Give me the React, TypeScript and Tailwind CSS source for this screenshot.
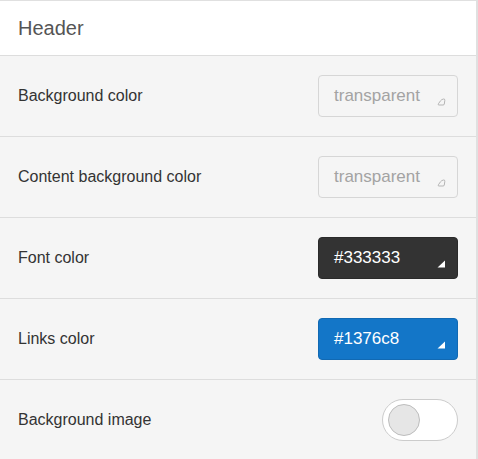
import React from 'react';

type ColorRow = {
  label: string;
  value: string;
  kind: 'empty' | 'dark' | 'blue';
};

const rows: ColorRow[] = [
  { label: 'Background color', value: 'transparent', kind: 'empty' },
  { label: 'Content background color', value: 'transparent', kind: 'empty' },
  { label: 'Font color', value: '#333333', kind: 'dark' },
  { label: 'Links color', value: '#1376c8', kind: 'blue' },
];

function Corner({ filled }: { filled: boolean }) {
  // little resize-like triangle in the bottom right of the picker
  return (
    <svg width="9" height="8" viewBox="0 0 9 8" className="absolute right-[11px] bottom-[10px]">
      {filled ? (
        <path d="M8 0.5 L8 7.5 L0.5 7.5 Z" fill="#ffffff" />
      ) : (
        <path
          d="M6.5 1 Q8 0.6 7.8 2.5 L7.3 6 Q7.2 7 6 7 L2 7 Q0.6 7 1.4 5.8 L3.5 2.8 Q4.5 1.4 6.5 1 Z"
          fill="none"
          stroke="#b5b5b5"
          strokeWidth="1"
        />
      )}
    </svg>
  );
}

function Picker({ value, kind }: { value: string; kind: ColorRow['kind'] }) {
  const base = 'relative w-[140px] h-[42px] rounded-[4px] flex items-center pl-[15px] text-[17px]';
  if (kind === 'dark') {
    return (
      <div className={`${base} bg-[#333333] border border-[#2a2a2a] text-white`}>
        {value}
        <Corner filled />
      </div>
    );
  }
  if (kind === 'blue') {
    return (
      <div className={`${base} bg-[#1376c8] border border-[#1169b3] text-white`}>
        {value}
        <Corner filled />
      </div>
    );
  }
  return (
    <div className={`${base} bg-[#f5f5f5] border border-[#d6d6d6] text-[#a3a3a3]`}>
      {value}
      <Corner filled={false} />
    </div>
  );
}

export default function App() {
  return (
    <div
      className="w-[478px] h-[459px] overflow-hidden bg-[#f5f5f5] border-t border-r-2 border-[#e0e0e0] text-[#333]"
      style={{ fontFamily: '"Liberation Sans", Arial, sans-serif' }}
    >
      {/* Section title */}
      <div className="h-[55px] bg-white border-b border-[#dddddd] flex items-center px-[18px]">
        <span className="text-[20px] text-[#555555]">Header</span>
      </div>

      {rows.map((row) => (
        <div
          key={row.label}
          className="h-[81px] border-b border-[#dddddd] flex items-center justify-between px-[18px]"
        >
          <span className="text-[16px]">{row.label}</span>
          <Picker value={row.value} kind={row.kind} />
        </div>
      ))}

      {/* Background image toggle */}
      <div className="h-[80px] flex items-center justify-between px-[18px]">
        <span className="text-[16px]">Background image</span>
        <div className="w-[76px] h-[42px] rounded-full border border-[#cccccc] bg-white flex items-center pl-[5px]">
          <div className="w-[32px] h-[32px] rounded-full bg-[#e6e6e6] border border-[#bdbdbd]" />
        </div>
      </div>
    </div>
  );
}
